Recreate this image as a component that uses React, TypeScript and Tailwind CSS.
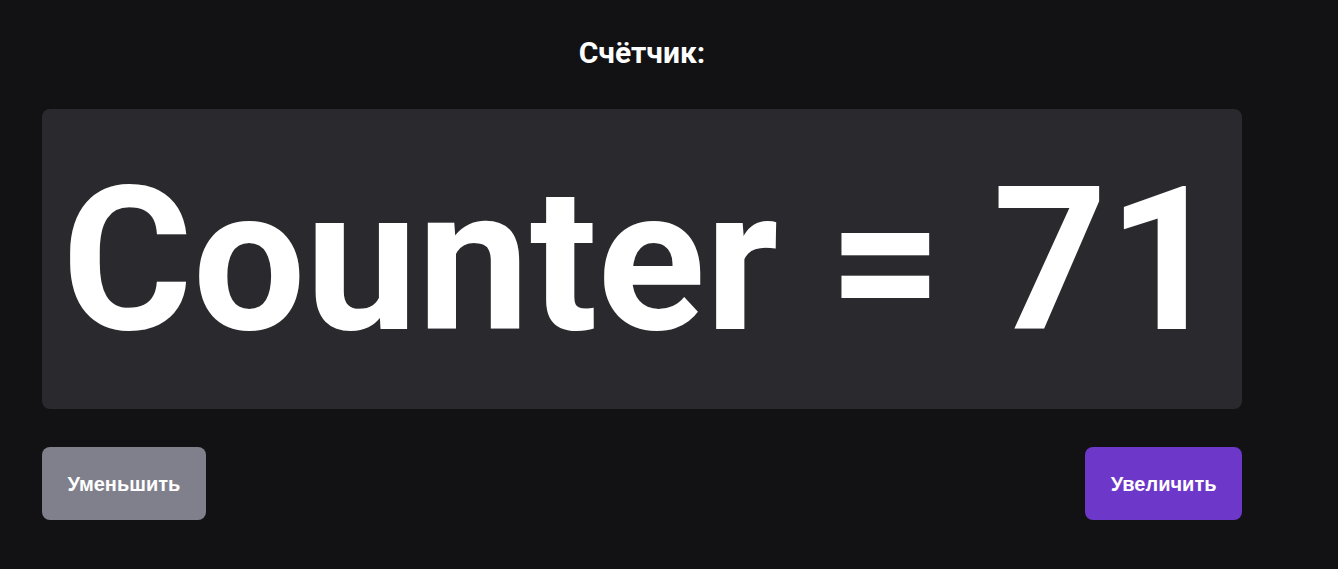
import React, { useState } from "react";

export default function App() {
  const [count, setCount] = useState(71);
  return (
    <div className="min-h-[569px] w-full bg-[#121214] text-white" style={{ fontFamily: "Roboto, 'Noto Sans', sans-serif" }}>
      <div className="ml-[42px] flex w-[1200px] flex-col pt-[36px]">
        <h1 className="text-center text-[30px] font-bold leading-[34px]">Счётчик:</h1>
        <div className="mt-[39px] flex h-[300px] items-center justify-center rounded-lg bg-[#29292e]">
          <span className="mt-[4px] whitespace-nowrap text-[200px] font-bold leading-none">Counter = {count}</span>
        </div>
        <div className="mt-[38px] flex items-center justify-between">
          <button
            onClick={() => setCount(count - 1)}
            className="flex h-[73px] items-center rounded-lg bg-[#80808c] px-[25.5px] text-[20px] font-bold text-white"
            style={{ fontFamily: "'Liberation Sans', Arial, sans-serif" }}
          >
            Уменьшить
          </button>
          <button
            onClick={() => setCount(count + 1)}
            className="flex h-[73px] items-center rounded-lg bg-[#6d38c9] px-[25.5px] text-[20px] font-bold text-white"
            style={{ fontFamily: "'Liberation Sans', Arial, sans-serif" }}
          >
            Увеличить
          </button>
        </div>
      </div>
    </div>
  );
}
